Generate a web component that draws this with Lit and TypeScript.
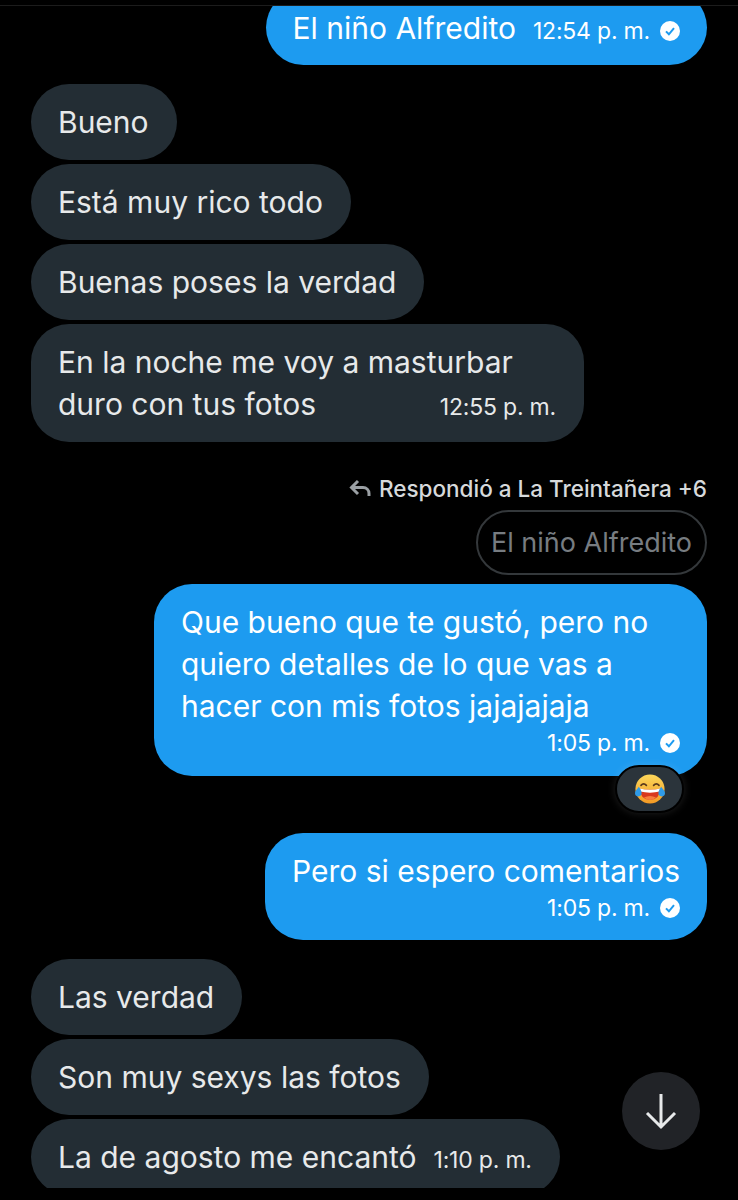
import { LitElement, css, html } from "lit";
import { customElement } from "lit/decorators.js";

const check = html`<svg class="check" viewBox="0 0 20 20" aria-hidden="true">
  <circle cx="10" cy="10" r="10" fill="#fff"></circle>
  <path d="M6 10.4l2.9 2.9L14 7.2" fill="none" stroke="#1d9bf0" stroke-width="2"></path>
</svg>`;

const laughing = html`<svg class="emoji" viewBox="0 0 32 32" aria-hidden="true">
  <defs>
    <linearGradient id="face" x1="0" y1="0" x2="0" y2="1">
      <stop offset="0" stop-color="#fbd75b"></stop>
      <stop offset="1" stop-color="#f49a24"></stop>
    </linearGradient>
  </defs>
  <circle cx="16" cy="16" r="14.6" fill="url(#face)"></circle>
  <path d="M7 12.4q2.6-3 5.4 0M19.6 12.4q2.8-3 5.4 0" fill="none" stroke="#5b3a1c" stroke-width="1.7" stroke-linecap="round"></path>
  <path d="M5.6 15.6q10.4 2.4 20.8 0q-.6 11.2-10.4 11.4q-9.800-.2-10.400-11.400z" fill="#d9391e"></path>
  <path d="M5.700 15.600q10.300 2.400 20.600 0l-.4 3q-9.900 2.200-19.800 0z" fill="#fff"></path>
  <path d="M10 24.400q6-3 12 0q-2.600 2.600-6 2.600t-6-2.600z" fill="#f77e3c"></path>
  <path d="M4.800 13.800c-1.500 2.500-3.800 4-3.800 6.300a3.300 3.300 0 0 0 6.600 0c0-2.300-1.500-4.200-2.800-6.300z" fill="#2f9be8"></path>
  <path d="M27.200 13.800c1.500 2.500 3.800 4 3.800 6.300a3.300 3.300 0 0 1-6.600 0c0-2.300 1.500-4.200 2.800-6.300z" fill="#2f9be8"></path>
</svg>`;

@customElement("app-root")
export class AppRoot extends LitElement {
  static styles = css`
    :host {
      display: block;
      position: relative;
      height: 1200px;
      overflow: hidden;
      background: #000;
      font-family: "Inter", "Liberation Sans", sans-serif;
      color: #e7e9ea;
    }
    .viewport {
      margin-top: 5px;
      height: 1182px;
      border-top: 1px solid #1c1c1c;
      overflow: hidden;
    }
    .list {
      display: flex;
      flex-direction: column;
      padding: 0 31px;
      margin-top: -16px;
    }
    .bubble {
      box-sizing: border-box;
      padding: 17px 27px;
      border-radius: 38px;
      font-size: 30px;
      line-height: 42px;
      white-space: nowrap;
    }
    .wide {
      width: 553px;
    }
    .in {
      align-self: flex-start;
      background: #232d34;
      margin-top: 4px;
      padding-right: 28px;
    }
    .in.first {
      margin-top: 19px;
    }
    .out {
      align-self: flex-end;
      background: #1d9bf0;
      color: #fff;
      padding-bottom: 16px;
    }
    .row {
      display: flex;
      align-items: baseline;
      justify-content: space-between;
      gap: 17px;
    }
    .meta {
      display: flex;
      justify-content: flex-end;
      align-items: center;
      height: 32px;
    }
    .time {
      display: inline-flex;
      align-items: center;
      gap: 10px;
      font-size: 23px;
      line-height: 32px;
      letter-spacing: -0.2px;
    }
    .check {
      width: 20px;
      height: 20px;
    }
    .reply {
      align-self: flex-end;
      display: flex;
      align-items: center;
      gap: 7px;
      margin-top: 31px;
      height: 30px;
      font-size: 22.5px;
      font-weight: 500;
      color: #d6d9db;
    }
    .reply svg {
      width: 23px;
      height: 20px;
    }
    .quoted {
      align-self: flex-end;
      box-sizing: border-box;
      height: 65px;
      margin-top: 7px;
      padding: 0 13px;
      display: flex;
      align-items: center;
      border: 2px solid #34383b;
      border-radius: 33px;
      font-size: 27px;
      color: #777c81;
    }
    .gap-quoted {
      margin-top: 9px;
      padding-bottom: 17px;
    }
    .react-wrap {
      align-self: flex-end;
      height: 68px;
      margin-top: -11px;
      margin-right: 23px;
    }
    .react {
      box-sizing: border-box;
      width: 69px;
      height: 48px;
      display: flex;
      align-items: center;
      justify-content: center;
      background: #2b343b;
      border: 2px solid #000;
      border-radius: 24px;
      box-shadow: 0 0 8px rgba(255, 255, 255, 0.12);
    }
    .emoji {
      width: 32px;
      height: 32px;
    }
    .gap-in {
      margin-top: 19px;
    }
    .scroll {
      position: absolute;
      left: 622px;
      top: 1072px;
      width: 78px;
      height: 78px;
      border-radius: 50%;
      background: #212327;
      display: flex;
      align-items: center;
      justify-content: center;
    }
    .scroll svg {
      width: 34px;
      height: 38px;
    }
  `;

  render() {
    return html`
      <div class="viewport">
        <div class="list">
          <div class="bubble out">
            <div class="row">
              <span>El niño Alfredito</span>
              <span class="time">12:54 p. m. ${check}</span>
            </div>
          </div>

          <div class="bubble in first">Bueno</div>
          <div class="bubble in">Está muy rico todo</div>
          <div class="bubble in">Buenas poses la verdad</div>
          <div class="bubble in wide">
            <div>En la noche me voy a masturbar</div>
            <div class="row">
              <span>duro con tus fotos</span>
              <span class="time">12:55 p. m.</span>
            </div>
          </div>

          <div class="reply">
            <svg viewBox="0 0 23 20" aria-hidden="true">
              <path d="M9 3L2.500 9.500 9 16M3 9.500h11c3.500 0 6 2.500 6 6V18" fill="none" stroke="#9a9fa3" stroke-width="3"></path>
            </svg>
            <span>Respondió a La Treintañera +6</span>
          </div>
          <div class="quoted">El niño Alfredito</div>

          <div class="bubble out wide gap-quoted">
            <div>Que bueno que te gustó, pero no</div>
            <div>quiero detalles de lo que vas a</div>
            <div>hacer con mis fotos jajajajaja</div>
            <div class="meta"><span class="time">1:05 p. m. ${check}</span></div>
          </div>
          <div class="react-wrap"><div class="react">${laughing}</div></div>

          <div class="bubble out">
            <div>Pero si espero comentarios</div>
            <div class="meta"><span class="time">1:05 p. m. ${check}</span></div>
          </div>

          <div class="bubble in gap-in">Las verdad</div>
          <div class="bubble in">Son muy sexys las fotos</div>
          <div class="bubble in">
            <div class="row">
              <span>La de agosto me encantó</span>
              <span class="time">1:10 p. m.</span>
            </div>
          </div>
        </div>
      </div>
      <div class="scroll">
        <svg viewBox="0 0 34 38" aria-hidden="true">
          <path d="M17 2v33M3 21l14 14 14-14" fill="none" stroke="#e7e9ea" stroke-width="3"></path>
        </svg>
      </div>
    `;
  }
}
